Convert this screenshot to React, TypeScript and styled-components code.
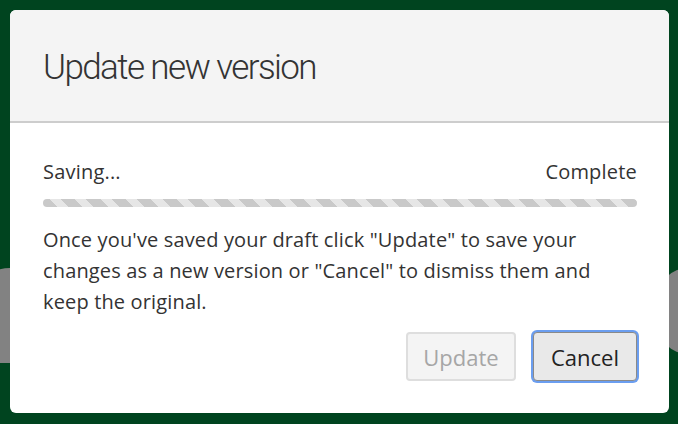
import React from "react";
import styled, { createGlobalStyle } from "styled-components";

const Global = createGlobalStyle`
  html, body { margin: 0; padding: 0; }
  body {
    background: #00441f;
    width: 678px;
    height: 424px;
    overflow: hidden;
    font-family: "Open Sans", "Noto Sans", sans-serif;
  }
`;

const Stage = styled.div`
  position: relative;
  width: 678px;
  height: 424px;
  padding: 10px 9px 11px 10px;
  box-sizing: border-box;
  overflow: hidden;
`;

const BackShape = styled.div<{ $side: "left" | "right" }>`
  position: absolute;
  background: #828282;
  top: 268px;
  ${(p) =>
    p.$side === "left"
      ? `left: -30px; width: 50px; height: 95px; border-radius: 40px 0 0 0;`
      : `right: -40px; width: 60px; height: 86px; border-radius: 40px;`}
`;

const Dialog = styled.div`
  position: relative;
  z-index: 1;
  height: 100%;
  background: #ffffff;
  border-radius: 6px;
  overflow: hidden;
  display: flex;
  flex-direction: column;
`;

const Header = styled.div`
  background: #f4f4f4;
  height: 111px;
  border-bottom: 2px solid #cdcdcd;
  display: flex;
  align-items: center;
  padding: 0 33px;
  box-sizing: content-box;
`;

const Title = styled.h1`
  margin: 0;
  font-family: Roboto, "Open Sans", sans-serif;
  font-weight: 300;
  font-size: 35px;
  color: #333333;
  letter-spacing: -1.6px;
  position: relative;
  top: 2px;
`;

const Body = styled.div`
  padding: 36px 32px 0 33px;
  display: flex;
  flex-direction: column;
`;

const StatusRow = styled.div`
  display: flex;
  justify-content: space-between;
  font-size: 20px;
  color: #333333;
  line-height: 26px;
  letter-spacing: 0.2px;
`;

const Progress = styled.div`
  margin-top: 14px;
  height: 8px;
  border-radius: 4px;
  background: repeating-linear-gradient(
    45deg,
    #c9c9c9 0px,
    #c9c9c9 10px,
    #e6e6e6 10px,
    #e6e6e6 18px
  );
`;

const Message = styled.p`
  margin: 17px 0 0;
  font-size: 20px;
  line-height: 31px;
  color: #333333;
  letter-spacing: 0.15px;
`;

const Actions = styled.div`
  display: flex;
  justify-content: flex-end;
  gap: 17px;
  margin-top: 15px;
`;

const Button = styled.button<{ $focused?: boolean; $w: number }>`
  width: ${(p) => p.$w}px;
  height: 49px;
  padding: 0;
  font-family: "Open Sans", "Noto Sans", sans-serif;
  font-size: 22px;
  border-radius: 4px;
  box-sizing: border-box;
  cursor: pointer;
  background: ${(p) => (p.$focused ? "#e9e9e9" : "#f4f4f4")};
  color: ${(p) => (p.$focused ? "#222222" : "#a6a6a6")};
  border: ${(p) => (p.$focused ? "1px solid #8a8a8a" : "2px solid #dedede")};
  box-shadow: ${(p) => (p.$focused ? "0 0 0 2px #6b9ef0" : "none")};
  &:disabled { cursor: default; }
`;

export default function App() {
  return (
    <>
      <Global />
      <Stage>
        <BackShape $side="left" />
        <BackShape $side="right" />
        <Dialog>
          <Header>
            <Title>Update new version</Title>
          </Header>
          <Body>
            <StatusRow>
              <span>Saving...</span>
              <span>Complete</span>
            </StatusRow>
            <Progress />
            <Message>
              Once you've saved your draft click "Update" to save your changes as a new version or "Cancel" to dismiss them and keep the original.
            </Message>
            <Actions>
              <Button disabled $w={110}>Update</Button>
              <Button $focused $w={104}>Cancel</Button>
            </Actions>
          </Body>
        </Dialog>
      </Stage>
    </>
  );
}
